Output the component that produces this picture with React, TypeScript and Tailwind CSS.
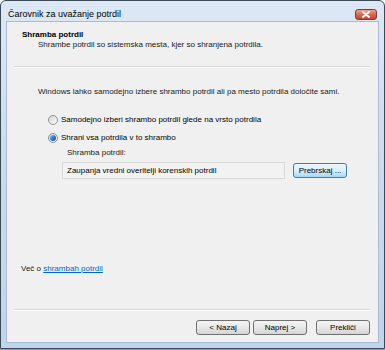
import type { ReactNode } from 'react'

const font = { fontFamily: '"Liberation Sans", Arial, sans-serif' }

function Radio({ checked, children }: { checked?: boolean; children: ReactNode }) {
  return (
    <div className="flex h-[12px] items-center">
      <div className="flex h-[10px] w-[10px] items-center justify-center rounded-full border border-[#8f9396] bg-gradient-to-br from-[#d6d6d6] to-[#fbfbfb]">
        {checked && (
          <div className="h-[6px] w-[6px] rounded-full bg-gradient-to-br from-[#8ecdf8] via-[#2b7ad6] to-[#0c4e9e]" />
        )}
      </div>
      <span className="ml-[3px] text-[8px] leading-[10px] text-black">{children}</span>
    </div>
  )
}

function WinButton({ children, blue }: { children: ReactNode; blue?: boolean }) {
  const look = blue
    ? 'border-[#3c7fb1] bg-gradient-to-b from-[#eaf6fd] via-[#d9f0fc] to-[#a7d9f5]'
    : 'border-[#707070] bg-gradient-to-b from-[#f4f4f4] via-[#e8e8e8] to-[#d4d4d4]'
  return (
    <button
      className={`flex h-[15px] w-[54px] items-center justify-center rounded-[3px] border text-[8px] leading-none text-black ${look}`}
    >
      {children}
    </button>
  )
}

export default function App() {
  return (
    <div className="h-[350px] w-[385px] bg-white" style={font}>
      <div className="flex h-[349px] w-[385px] flex-col rounded-t-[6px] border border-[#3b4856] bg-gradient-to-b from-[#dce8f5] via-[#c9dbef] to-[#bfd5ed]">
        {/* title bar */}
        <div className="flex h-[20px] items-end justify-between pb-[1px] pl-[7px] pr-[7px]">
          <span className="mb-[1px] text-[9px] leading-[9px] text-black">Čarovnik za uvažanje potrdil</span>
          <div className="flex h-[11px] w-[22px] items-center justify-center rounded-[3px] border border-[#8a3a2c] bg-gradient-to-b from-[#e8a593] via-[#d46a52] to-[#c04a2f]">
            <svg width="8" height="7" viewBox="0 0 8 7">
              <path d="M1 1 L7 6 M7 1 L1 6" stroke="#ffffff" strokeWidth="1.8" strokeLinecap="round" />
            </svg>
          </div>
        </div>

        {/* client area */}
        <div className="mx-[5px] mb-[5px] flex flex-1 flex-col border border-[#a8bbd1] bg-[#f0f0f0]">
          <div className="mt-[8px] pl-[15px] text-[8px] font-bold leading-[10px] text-black">Shramba potrdil</div>
          <div className="pl-[31px] text-[8px] leading-[10px] text-[#1a1a1a]">
            Shrambe potrdil so sistemska mesta, kjer so shranjena potrdila.
          </div>
          <div className="ml-[7px] mr-[8px] mt-[16px] border-t border-b border-t-[#d6d6d6] border-b-white" />

          <div className="mt-[19px] pl-[31px] text-[8px] leading-[10px] text-[#1a1a1a]">
            Windows lahko samodejno izbere shrambo potrdil ali pa mesto potrdila določite sami.
          </div>

          <div className="mt-[17px] flex flex-col gap-[6px] pl-[41px]">
            <Radio>Samodejno izberi shrambo potrdil glede na vrsto potrdila</Radio>
            <Radio checked>Shrani vsa potrdila v to shrambo</Radio>
          </div>

          <div className="mt-[4px] pl-[60px] text-[8px] leading-[10px] text-[#1a1a1a]">Shramba potrdil:</div>
          <div className="mt-[4px] flex items-center gap-[8px] pl-[55px]">
            <div className="flex h-[17px] w-[223px] items-center border border-[#d9d9d9] bg-[#f2f2f2] pl-[4px] text-[8px] text-black">
              Zaupanja vredni overitelji korenskih potrdil
            </div>
            <WinButton blue>Prebrskaj ...</WinButton>
          </div>

          <div className="flex-1" />

          <div className="pl-[14px] text-[8px] leading-[10px] text-[#1a1a1a]">
            Več o <span className="text-[#0066cc] underline">shrambah potrdil</span>
          </div>

          <div className="ml-[7px] mr-[8px] mt-[35px] border-t border-b border-t-[#d6d6d6] border-b-white" />

          <div className="mb-[7px] mr-[8px] mt-[9px] flex justify-end">
            <div className="flex gap-[3px]">
              <WinButton>&lt; Nazaj</WinButton>
              <WinButton>Naprej &gt;</WinButton>
            </div>
            <div className="ml-[9px]">
              <WinButton>Prekliči</WinButton>
            </div>
          </div>
        </div>
      </div>
      <div className="h-[1px] w-[385px] bg-[#3fbfe0]" />
    </div>
  )
}
